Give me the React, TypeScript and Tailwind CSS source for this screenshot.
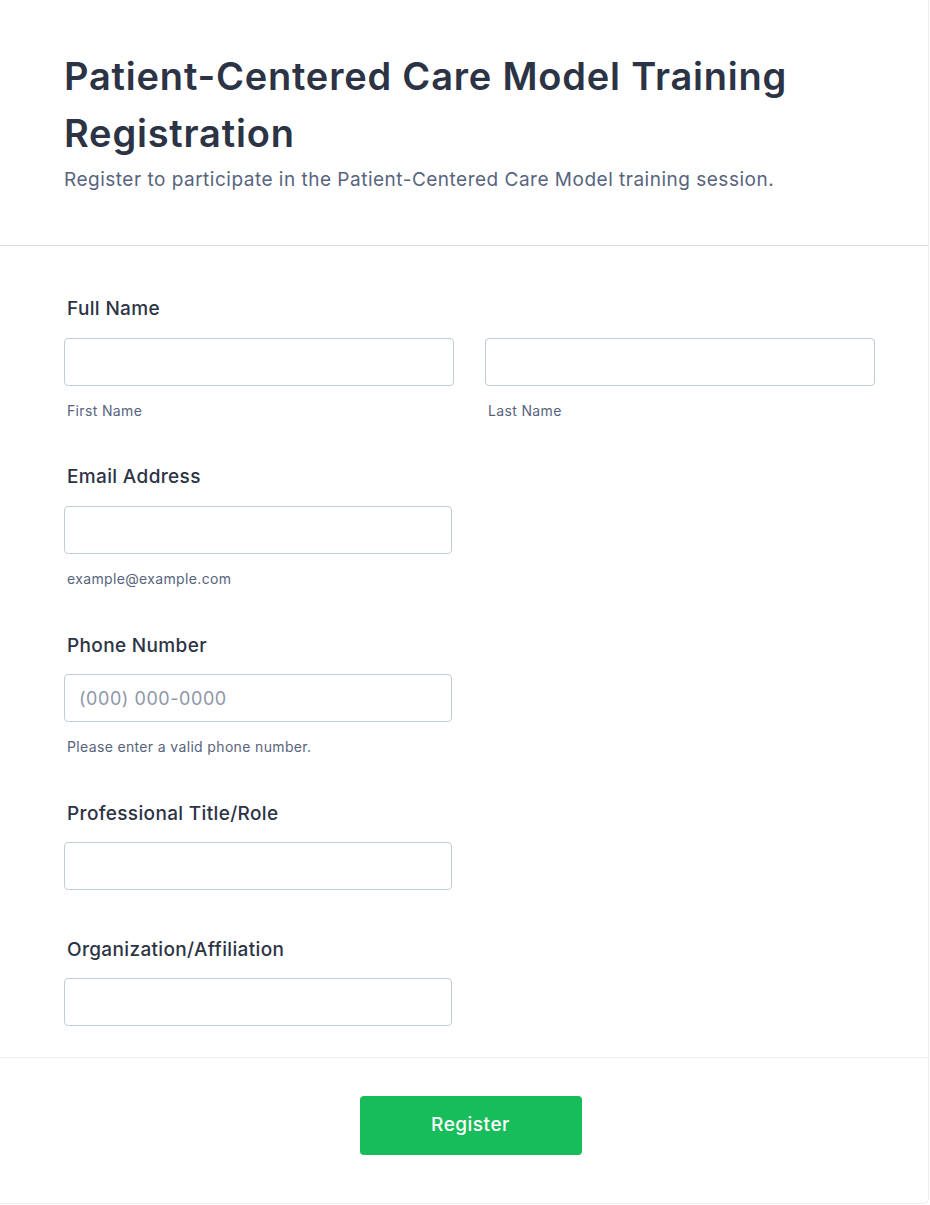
function Field({
  label,
  sub,
  placeholder,
  tight = true,
}: {
  label: string;
  sub?: string;
  placeholder?: string;
  tight?: boolean;
}) {
  return (
    <div className="flex flex-col">
      <label className="pl-[3px] text-[19px] font-medium leading-6 tracking-[0.35px] text-[#2c3345]">
        {label}
      </label>
      <input
        className={`${tight ? "mt-[16px]" : "mt-[17px]"} h-12 w-[388px] rounded-[4px] border border-[#c3cad8] bg-white px-[14px] text-lg tracking-[0.55px] text-[#2c3345] outline-none placeholder:text-[#8e96a8]`}
        placeholder={placeholder}
      />
      {sub && (
        <span className="mt-[15px] pl-[3px] text-sm leading-5 tracking-[0.35px] text-[#57647e]">
          {sub}
        </span>
      )}
    </div>
  );
}

export default function App() {
  return (
    <div
      className="min-h-[1205px] bg-white"
      style={{ fontFamily: "Inter, 'Noto Sans', sans-serif" }}
    >
      <div className="w-[929px] rounded-br-md border-r border-b border-[#eceef3] bg-white">
        <header className="border-b border-[#d8dbe4] px-16 pt-[48px] pb-[51px]">
          <h1 className="text-[38px] font-semibold leading-[57px] tracking-[0.8px] text-[#2c3345]">
            Patient-Centered Care Model Training Registration
          </h1>
          <p className="mt-[4px] text-[19px] leading-7 tracking-[0.5px] text-[#57647e]">
            Register to participate in the Patient-Centered Care Model training
            session.
          </p>
        </header>

        <main className="px-16 pt-[51px] pb-[31px]">
          <div className="flex flex-col">
            <label className="pl-[3px] text-[19px] font-medium leading-6 tracking-[0.35px] text-[#2c3345]">
              Full Name
            </label>
            <div className="mt-[17px] flex gap-[31px]">
              <div className="flex flex-col">
                <input className="h-12 w-[390px] rounded-[4px] border border-[#c3cad8] bg-white px-[14px] outline-none" />
                <span className="mt-[15px] pl-[3px] text-sm leading-5 tracking-[0.35px] text-[#57647e]">
                  First Name
                </span>
              </div>
              <div className="flex flex-col">
                <input className="h-12 w-[390px] rounded-[4px] border border-[#c3cad8] bg-white px-[14px] outline-none" />
                <span className="mt-[15px] pl-[3px] text-sm leading-5 tracking-[0.35px] text-[#57647e]">
                  Last Name
                </span>
              </div>
            </div>
          </div>

          <div className="mt-[44px]">
            <Field label="Email Address" sub="example@example.com" tight={false} />
          </div>
          <div className="mt-[45px]">
            <Field
              label="Phone Number"
              sub="Please enter a valid phone number."
              placeholder="(000) 000-0000"
            />
          </div>
          <div className="mt-[45px]">
            <Field label="Professional Title/Role" />
          </div>
          <div className="mt-[48px]">
            <Field label="Organization/Affiliation" />
          </div>
        </main>

        <footer className="flex justify-center border-t border-[#eef0f6] pt-[38px] pb-[48px]">
          <button className="ml-[13px] h-[59px] w-[222px] rounded-[4px] bg-[#18bd5b] text-[19px] font-medium tracking-[0.5px] text-white">
            Register
          </button>
        </footer>
      </div>
    </div>
  );
}
